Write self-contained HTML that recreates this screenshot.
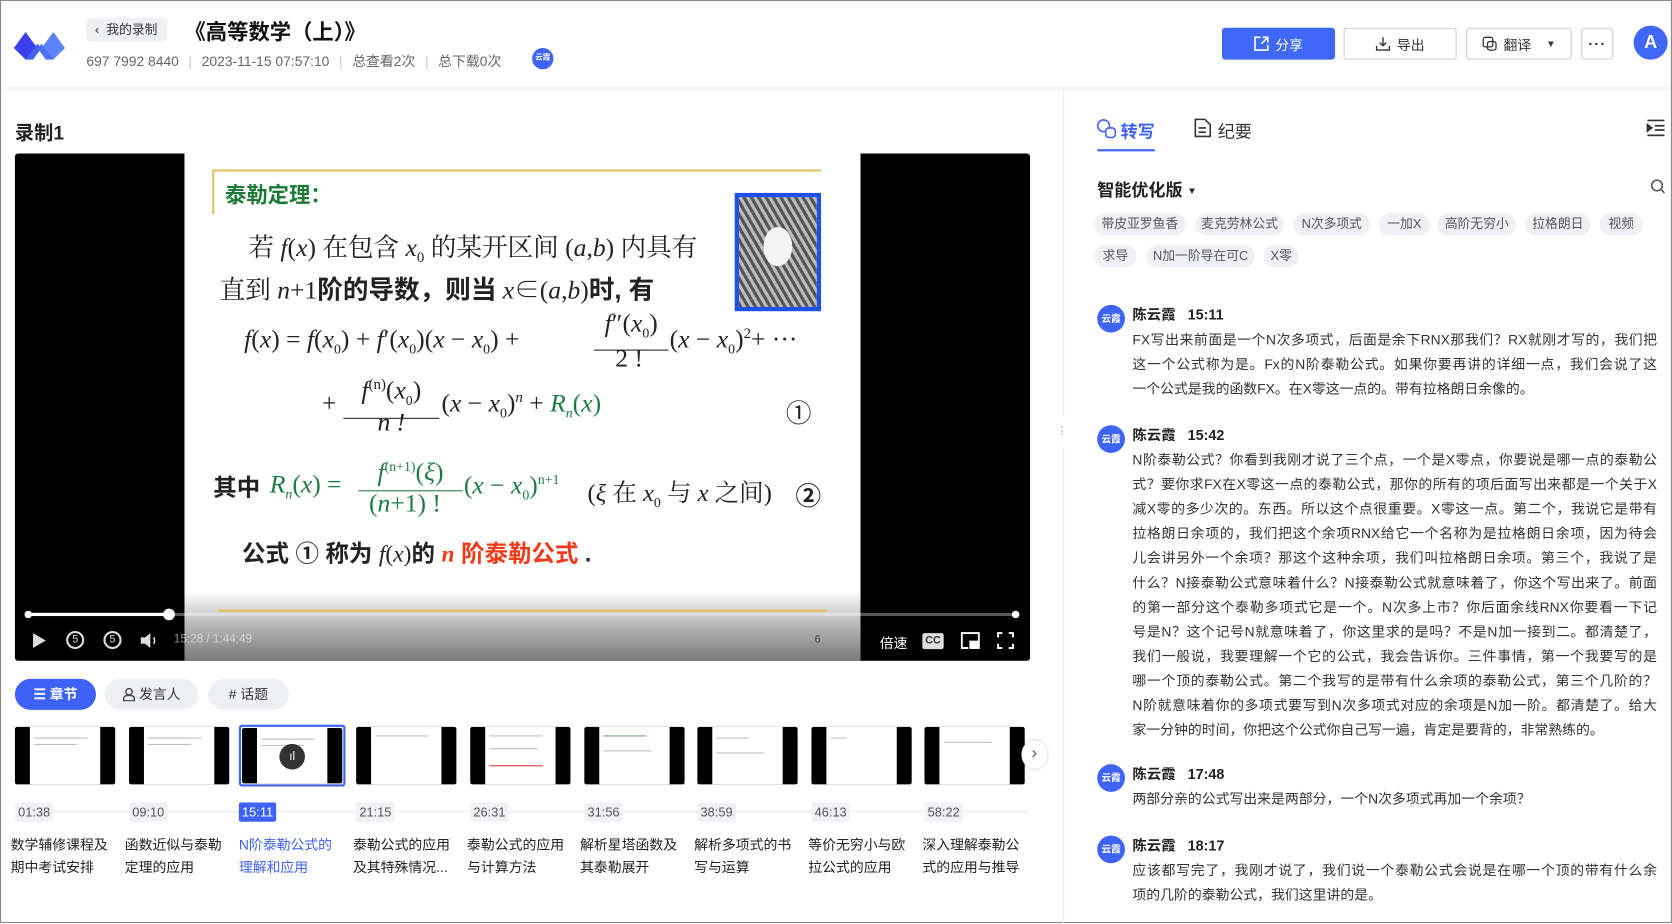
<!DOCTYPE html>
<html><head><meta charset="utf-8">
<style>
*{box-sizing:border-box;margin:0;padding:0}
html,body{width:1672px;height:923px;overflow:hidden;background:#fff}
body{font-family:"Liberation Sans","Noto Sans CJK SC",sans-serif;color:#222}
#w{position:absolute;left:0;top:0;width:1568px;height:866px;transform:scale(1.0663,1.0658);transform-origin:0 0;border:1px solid #888;background:#fff}
.a{position:absolute}
.hdr{left:0;top:0;width:1566px;height:82px;border-bottom:1px solid #ececf0;box-shadow:0 2px 4px rgba(0,0,0,.04)}
.btn{position:absolute;top:25px;height:30px;border:1px solid #ccc;border-radius:3px;font-size:13px;display:flex;align-items:center;justify-content:center;gap:6px;color:#333;background:#fff}
.meta{font-size:13px;color:#666;top:46px}
.sep{color:#ccc;margin:0 9px}
.tag{position:absolute;height:21px;line-height:21px;border-radius:11px;background:#eff0f4;font-size:12px;color:#555;text-align:center}
.av{position:absolute;width:26px;height:26px;border-radius:50%;background:#3f63f5;color:#fff;font-size:9px;font-weight:bold;text-align:center;line-height:26px}
.nm{position:absolute;font-size:13.5px;font-weight:bold;color:#222}
.tx{position:absolute;left:1061px;width:492px;font-size:13px;line-height:23px;color:#333}
.tx div{white-space:nowrap;text-align:justify;text-align-last:justify}
.tx div.l{text-align-last:left}
.th{position:absolute;top:681px;width:94px;height:54px;background:#000;border-radius:2px;overflow:hidden}
.th i{position:absolute;left:14px;top:0;width:66px;height:54px;background:#fff}
.th b{position:absolute;left:18px;height:1px;background:#bbb}
.ts{position:absolute;top:752px;height:18px;line-height:18px;font-size:12px;color:#555;background:#f0f1f5;border-radius:2px;padding:0 3px}
.ct{position:absolute;top:781px;width:104px;font-size:13px;line-height:21px;color:#222}
.m{font-family:"Liberation Serif","Noto Serif CJK SC",serif}
.i{font-style:italic}
.sl{position:absolute;white-space:nowrap}
</style></head><body><div id="w">

<div class="a hdr"></div>
<svg class="a" style="left:12px;top:26px" width="50" height="30" viewBox="0 0 50 30"><path d="M0 18 L11 3 L22 18 L11 29Z" fill="#3a3ff0"/><path d="M26 18 L37 3 L48 18 L37 29Z" fill="#5b84fb"/><path d="M11 29 L22 14 L26 18 L18 29Z" fill="#4a60f5"/><path d="M22 18 L26 14 L37 29 L30 29Z" fill="#4c70f8"/></svg>
<div class="a" style="left:80px;top:16px;width:76px;height:22px;background:#eff0f4;border-radius:4px;font-size:12px;line-height:22px;color:#333;padding-left:8px">‹&nbsp; 我的录制</div>
<div class="a" style="left:172px;top:13px;font-size:20px;font-weight:bold;color:#111">《高等数学（上）》</div>
<div class="a meta" style="left:80px">697 7992 8440<span class="sep">|</span>2023-11-15 07:57:10<span class="sep">|</span>总查看2次<span class="sep">|</span>总下载0次</div>
<div class="a" style="left:498px;top:44px;width:20px;height:20px;border-radius:50%;background:#3f63f5;color:#fff;font-size:7px;text-align:center;line-height:20px;font-weight:bold">云霞</div>

<div class="btn" style="left:1145px;width:106px;background:#3e68f5;border-color:#3e68f5;color:#fff"><svg width="14" height="14" viewBox="0 0 14 14" fill="none" stroke="#fff" stroke-width="1.5"><path d="M6 1H1v12h12V8M8 1h5v5M13 1L7 7"/></svg>分享</div>
<div class="btn" style="left:1259px;width:106px"><svg width="14" height="14" viewBox="0 0 14 14" fill="none" stroke="#333" stroke-width="1.3"><path d="M7 1v8M4 6l3 3 3-3M1 9v4h12V9"/></svg>导出</div>
<div class="btn" style="left:1374px;width:99px"><svg width="14" height="14" viewBox="0 0 14 14" fill="none" stroke="#333" stroke-width="1.2"><rect x="1" y="1" width="9" height="9" rx="2"/><rect x="5" y="5" width="8" height="8" rx="2"/></svg>翻译 <span style="font-size:9px;margin-left:8px">▼</span></div>
<div class="btn" style="left:1482px;width:30px;font-weight:bold;font-size:14px;letter-spacing:1px">···</div>
<div class="a" style="left:1531px;top:23px;width:32px;height:32px;border-radius:50%;background:#3e68f5;color:#fff;font-size:17px;font-weight:bold;text-align:center;line-height:32px">A</div>

<div class="a" style="left:13px;top:110px;font-size:18px;font-weight:bold">录制1</div>
<div class="a" style="left:13px;top:143px;width:952px;height:476px;background:#000;border-radius:3px;overflow:hidden">
  <div class="a" style="left:159px;top:0;width:634px;height:476px;background:linear-gradient(#fff 0,#fff 410px,#bbb 476px)"></div>
  <div class="a" style="left:185px;top:15px;width:571px;height:2px;background:#e0c060"></div>
  <div class="a" style="left:185px;top:15px;width:2px;height:42px;background:#e0c060"></div>
  <div class="sl" style="left:197px;top:23px;font-size:20px;font-weight:bold;color:#1c7a36">泰勒定理：</div>
  <div class="a" style="left:675px;top:37px;width:81px;height:111px;border:4px solid #1f50e8;background:radial-gradient(ellipse 22px 30px at 50% 45%,#f4f4f4 60%,transparent 62%),repeating-linear-gradient(60deg,#555 0 3px,#bbb 3px 6px)"></div>
  <div class="sl m" style="left:219px;top:68px;font-size:24px;color:#222">若 <span class="i">f</span>(<span class="i">x</span>) 在包含 <span class="i">x</span><sub style="font-size:14px">0</sub> 的某开区间 (<span class="i">a</span>,<span class="i">b</span>) 内具有</div>
  <div class="sl m" style="left:192px;top:108px;font-size:24px;color:#222">直到 <span class="i">n</span>+1<b style="font-family:'Liberation Sans','Noto Sans CJK SC',sans-serif">阶的导数，则当</b> <span class="i">x</span>∈(<span class="i">a</span>,<span class="i">b</span>)<b style="font-family:'Liberation Sans','Noto Sans CJK SC',sans-serif">时, 有</b></div>
  <div class="sl m" style="left:215px;top:162px;font-size:24px"><span class="i">f</span>(<span class="i">x</span>) = <span class="i">f</span>(<span class="i">x</span><sub style="font-size:13px">0</sub>) + <span class="i">f</span>′(<span class="i">x</span><sub style="font-size:13px">0</sub>)(<span class="i">x</span> − <span class="i">x</span><sub style="font-size:13px">0</sub>) +</div>
  <div class="sl m" style="left:543px;top:145px;font-size:24px;text-align:center;width:70px;border-bottom:1.5px solid #222;line-height:30px"><span class="i">f</span>″(<span class="i">x</span><sub style="font-size:13px">0</sub>)</div>
  <div class="sl m" style="left:563px;top:180px;font-size:24px">2 !</div>
  <div class="sl m" style="left:614px;top:162px;font-size:24px">(<span class="i">x</span> − <span class="i">x</span><sub style="font-size:13px">0</sub>)<sup style="font-size:14px">2</sup>+ ···</div>
  <div class="sl m" style="left:288px;top:222px;font-size:24px">+</div>
  <div class="sl m" style="left:308px;top:202px;font-size:24px;text-align:center;width:90px;border-bottom:1.5px solid #222;line-height:32px"><span class="i">f</span><sup style="font-size:14px">(n)</sup>(<span class="i">x</span><sub style="font-size:13px">0</sub>)</div>
  <div class="sl m i" style="left:340px;top:240px;font-size:24px">n !</div>
  <div class="sl m" style="left:400px;top:222px;font-size:24px">(<span class="i">x</span> − <span class="i">x</span><sub style="font-size:13px">0</sub>)<sup class="i" style="font-size:14px">n</sup> + <span style="color:#1d7a45"><span class="i">R</span><sub class="i" style="font-size:13px">n</sub>(<span class="i">x</span>)</span></div>
  <div class="sl" style="left:723px;top:224px;font-size:24px">①</div>
  <div class="sl" style="left:186px;top:296px;font-size:22px;font-weight:bold">其中</div>
  <div class="sl m" style="left:239px;top:298px;font-size:24px;color:#1d7a45"><span class="i">R</span><sub class="i" style="font-size:13px">n</sub>(<span class="i">x</span>) =</div>
  <div class="sl m" style="left:322px;top:278px;font-size:24px;color:#1d7a45;text-align:center;width:98px;border-bottom:1.5px solid #1d7a45;line-height:32px"><span class="i">f</span><sup style="font-size:13px">(n+1)</sup>(<span class="i">ξ</span>)</div>
  <div class="sl m" style="left:332px;top:316px;font-size:24px;color:#1d7a45">(<span class="i">n</span>+1) !</div>
  <div class="sl m" style="left:421px;top:298px;font-size:24px;color:#1d7a45">(<span class="i">x</span> − <span class="i">x</span><sub style="font-size:13px">0</sub>)<sup style="font-size:13px">n+1</sup></div>
  <div class="sl m" style="left:537px;top:300px;font-size:23px">(<span class="i">ξ</span> 在 <span class="i">x</span><sub style="font-size:13px">0</sub> 与 <span class="i">x</span> 之间)</div>
  <div class="sl" style="left:732px;top:302px;font-size:24px;font-weight:bold">②</div>
  <div class="sl" style="left:213px;top:358px;font-size:22px;font-weight:bold">公式 ① 称为 <span class="m i" style="font-weight:normal">f</span><span class="m" style="font-weight:normal">(<span class="i">x</span>)</span>的 <span class="m i" style="color:#f03a1a">n</span> <span style="color:#f03a1a">阶泰勒公式</span> .</div>
  <div class="a" style="left:0;top:412px;width:952px;height:64px;background:linear-gradient(rgba(0,0,0,0),rgba(0,0,0,.35))"></div>
  <div class="a" style="left:190px;top:428px;width:572px;height:2px;background:#e3c25c"></div>
  <div class="a" style="left:11px;top:431px;width:929px;height:3px;background:rgba(255,255,255,.35)"></div>
  <div class="a" style="left:11px;top:431px;width:134px;height:3px;background:#fff"></div>
  <div class="a" style="left:139px;top:427px;width:11px;height:11px;border-radius:50%;background:#fff"></div>
  <div class="a" style="left:935px;top:429px;width:7px;height:7px;border-radius:50%;background:#fff"></div>
  <div class="a" style="left:9px;top:429px;width:7px;height:7px;border-radius:50%;background:#fff"></div>
  <svg class="a" style="left:16px;top:449px" width="14" height="16"><path d="M1 1L13 8L1 15Z" fill="#ddd"/></svg>
  <div class="a" style="left:48px;top:448px;width:17px;height:17px;border:2px solid #ddd;border-radius:50%;color:#ddd;font-size:10px;text-align:center;line-height:13px">5</div>
  <div class="a" style="left:83px;top:448px;width:17px;height:17px;border:2px solid #ddd;border-radius:50%;color:#ddd;font-size:10px;text-align:center;line-height:13px">5</div>
  <svg class="a" style="left:117px;top:449px" width="18" height="16"><path d="M1 5h4l5-4v14l-5-4H1z" fill="#ddd"/><path d="M13 5q2 3 0 6" stroke="#ddd" fill="none" stroke-width="1.5"/></svg>
  <div class="a" style="left:149px;top:450px;font-size:11px;color:rgba(255,255,255,.55)">15:28 / 1:44:49</div>
  <div class="a" style="left:750px;top:451px;font-size:10px;color:#444">6</div>
  <div class="a" style="left:811px;top:449px;font-size:13px;color:#fff">倍速</div>
  <div class="a" style="left:851px;top:450px;width:20px;height:15px;border-radius:2px;background:#ddd;color:#333;font-size:10px;font-weight:bold;text-align:center;line-height:15px">CC</div>
  <svg class="a" style="left:887px;top:449px" width="18" height="16" fill="none" stroke="#fff" stroke-width="1.8"><path d="M7 15H1V1h16v8"/><rect x="9" y="9" width="8" height="6" fill="#fff"/></svg>
  <svg class="a" style="left:921px;top:449px" width="16" height="16" fill="none" stroke="#fff" stroke-width="1.8"><path d="M1 5V1h4M11 1h4v4M15 11v4h-4M5 15H1v-4"/></svg>
</div>

<div class="a" style="left:13px;top:636px;width:76px;height:29px;border-radius:15px;background:#3e62f6;color:#fff;font-size:13px;font-weight:bold;line-height:29px;text-align:center">☰ 章节</div>
<div class="a" style="left:97px;top:636px;width:88px;height:29px;border-radius:15px;background:#eff0f4;color:#333;font-size:13px;line-height:29px;text-align:center"><svg width="12" height="13" viewBox="0 0 12 13" fill="none" stroke="#444" stroke-width="1.3" style="vertical-align:-2px"><circle cx="6" cy="4" r="3"/><path d="M1 12.5v-2q0-3 5-3t5 3v2z"/></svg> 发言人</div>
<div class="a" style="left:194px;top:636px;width:76px;height:29px;border-radius:15px;background:#eff0f4;color:#333;font-size:13px;line-height:29px;text-align:center"># 话题</div>

<div class="th" style="left:13px"><i></i><b style="top:10px;width:50px"></b><b style="top:16px;width:40px"></b></div>
<div class="th" style="left:120px"><i></i><b style="top:10px;width:50px"></b><b style="top:16px;width:40px"></b></div>
<div class="a" style="left:223px;top:679px;width:100px;height:58px;border:2px solid #3e62f6;border-radius:3px"></div>
<div class="th" style="left:226px;top:682px;width:94px;height:52px"><i></i><b style="top:10px;width:50px"></b><b style="top:16px;width:40px"></b><div class="a" style="left:35px;top:15px;width:24px;height:24px;border-radius:50%;background:#333;color:#fff;font-size:11px;text-align:center;line-height:24px">ıl</div></div>
<div class="th" style="left:333px"><i></i><b style="top:8px;width:50px"></b></div>
<div class="th" style="left:440px"><i></i><b style="top:8px;width:50px"></b><b style="top:20px;width:45px"></b><b style="top:36px;width:50px;background:#d33"></b></div>
<div class="th" style="left:547px"><i></i><b style="top:8px;width:40px;background:#6a6"></b><b style="top:22px;width:45px"></b></div>
<div class="th" style="left:653px"><i></i><b style="top:10px;width:30px"></b><b style="top:24px;width:45px"></b></div>
<div class="th" style="left:760px"><i></i><b style="top:10px;width:15px"></b></div>
<div class="th" style="left:866px;width:94px"><i></i><b style="top:14px;width:45px"></b></div>
<div class="a" style="left:957px;top:694px;width:24px;height:26px;border-radius:12px;background:#fff;box-shadow:0 0 4px rgba(0,0,0,.2);text-align:center;font-size:16px;line-height:24px;color:#555">›</div>

<div class="a" style="left:13px;top:760px;width:950px;height:1px;background:#e6e7eb"></div>
<div class="ts" style="left:13px">01:38</div>
<div class="ts" style="left:120px">09:10</div>
<div class="ts" style="left:223px;background:#3e62f6;color:#fff">15:11</div>
<div class="ts" style="left:333px">21:15</div>
<div class="ts" style="left:440px">26:31</div>
<div class="ts" style="left:547px">31:56</div>
<div class="ts" style="left:653px">38:59</div>
<div class="ts" style="left:760px">46:13</div>
<div class="ts" style="left:866px">58:22</div>

<div class="ct" style="left:9px">数学辅修课程及<br>期中考试安排</div>
<div class="ct" style="left:116px">函数近似与泰勒<br>定理的应用</div>
<div class="ct" style="left:223px;color:#3e62f6">N阶泰勒公式的<br>理解和应用</div>
<div class="ct" style="left:330px">泰勒公式的应用<br>及其特殊情况...</div>
<div class="ct" style="left:437px">泰勒公式的应用<br>与计算方法</div>
<div class="ct" style="left:543px">解析星塔函数及<br>其泰勒展开</div>
<div class="ct" style="left:650px">解析多项式的书<br>写与运算</div>
<div class="ct" style="left:757px">等价无穷小与欧<br>拉公式的应用</div>
<div class="ct" style="left:864px">深入理解泰勒公<br>式的应用与推导</div>

<div class="a" style="left:996px;top:83px;width:1px;height:783px;background:#ececf0"></div>
<div class="a" style="left:990px;top:390px;width:8px;height:28px;background:#fff;color:#999;font-size:10px;line-height:28px">⋮</div>
<svg class="a" style="left:1027px;top:110px" width="20" height="20" fill="none" stroke="#3e62f6" stroke-width="1.5"><circle cx="7" cy="7" r="5.5"/><rect x="9" y="9" width="9" height="9" rx="3" fill="#fff"/></svg>
<div class="a" style="left:1050px;top:109px;font-size:16px;color:#3e62f6;font-weight:bold">转写</div>
<div class="a" style="left:1028px;top:139px;width:54px;height:2px;background:#3e62f6"></div>
<svg class="a" style="left:1119px;top:110px" width="16" height="18" fill="none" stroke="#333" stroke-width="1.5"><path d="M1 1h9l5 5v11H1z M4 9h7M4 13h7"/></svg>
<div class="a" style="left:1141px;top:109px;font-size:16px;color:#333">纪要</div>
<svg class="a" style="left:1543px;top:111px" width="18" height="16" fill="none" stroke="#333" stroke-width="1.6"><path d="M1 1h16M8 6h9M8 10h9M1 15h16"/><path d="M1 5l4 3-4 3z" fill="#333"/></svg>

<div class="a" style="left:1028px;top:164px;font-size:16px;font-weight:bold">智能优化版 <span style="font-size:9px;vertical-align:2px">▼</span></div>
<svg class="a" style="left:1547px;top:167px" width="14" height="14" fill="none" stroke="#555" stroke-width="1.5"><circle cx="6" cy="6" r="5"/><path d="M10 10l3 3"/></svg>

<div class="tag" style="left:1025px;top:199px;width:86px">带皮亚罗鱼香</div>
<div class="tag" style="left:1120px;top:199px;width:83px">麦克劳林公式</div>
<div class="tag" style="left:1212px;top:199px;width:72px">N次多项式</div>
<div class="tag" style="left:1292px;top:199px;width:48px">一加X</div>
<div class="tag" style="left:1347px;top:199px;width:74px">高阶无穷小</div>
<div class="tag" style="left:1429px;top:199px;width:62px">拉格朗日</div>
<div class="tag" style="left:1499px;top:199px;width:41px">视频</div>
<div class="tag" style="left:1025px;top:229px;width:40px">求导</div>
<div class="tag" style="left:1074px;top:229px;width:102px">N加一阶导在可C</div>
<div class="tag" style="left:1184px;top:229px;width:33px">X零</div>

<div class="av" style="left:1028px;top:285px">云霞</div>
<div class="nm" style="left:1061px;top:283px">陈云霞 &nbsp;&nbsp;15:11</div>
<div class="tx" style="top:306px">
<div>FX写出来前面是一个N次多项式，后面是余下RNX那我们？RX就刚才写的，我们把</div>
<div>这一个公式称为是。Fx的N阶泰勒公式。如果你要再讲的详细一点，我们会说了这</div>
<div class="l">一个公式是我的函数FX。在X零这一点的。带有拉格朗日余像的。</div>
</div>

<div class="av" style="left:1028px;top:398px">云霞</div>
<div class="nm" style="left:1061px;top:396px">陈云霞 &nbsp;&nbsp;15:42</div>
<div class="tx" style="top:419px">
<div>N阶泰勒公式？你看到我刚才说了三个点，一个是X零点，你要说是哪一点的泰勒公</div>
<div>式？要你求FX在X零这一点的泰勒公式，那你的所有的项后面写出来都是一个关于X</div>
<div>减X零的多少次的。东西。所以这个点很重要。X零这一点。第二个，我说它是带有</div>
<div>拉格朗日余项的，我们把这个余项RNX给它一个名称为是拉格朗日余项，因为待会</div>
<div>儿会讲另外一个余项？那这个这种余项，我们叫拉格朗日余项。第三个，我说了是</div>
<div>什么？N接泰勒公式意味着什么？N接泰勒公式就意味着了，你这个写出来了。前面</div>
<div>的第一部分这个泰勒多项式它是一个。N次多上市？你后面余线RNX你要看一下记</div>
<div>号是N？这个记号N就意味着了，你这里求的是吗？不是N加一接到二。都清楚了，</div>
<div>我们一般说，我要理解一个它的公式，我会告诉你。三件事情，第一个我要写的是</div>
<div>哪一个顶的泰勒公式。第二个我写的是带有什么余项的泰勒公式，第三个几阶的？</div>
<div>N阶就意味着你的多项式要写到N次多项式对应的余项是N加一阶。都清楚了。给大</div>
<div class="l">家一分钟的时间，你把这个公式你自己写一遍，肯定是要背的，非常熟练的。</div>
</div>

<div class="av" style="left:1028px;top:716px">云霞</div>
<div class="nm" style="left:1061px;top:714px">陈云霞 &nbsp;&nbsp;17:48</div>
<div class="tx" style="top:737px"><div class="l">两部分亲的公式写出来是两部分，一个N次多项式再加一个余项？</div></div>

<div class="av" style="left:1028px;top:783px">云霞</div>
<div class="nm" style="left:1061px;top:781px">陈云霞 &nbsp;&nbsp;18:17</div>
<div class="tx" style="top:804px">
<div>应该都写完了，我刚才说了，我们说一个泰勒公式会说是在哪一个顶的带有什么余</div>
<div class="l">项的几阶的泰勒公式，我们这里讲的是。</div>
</div>

</div></body></html>
